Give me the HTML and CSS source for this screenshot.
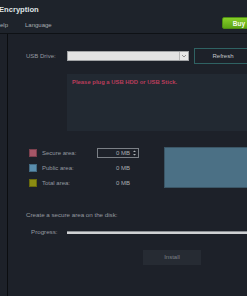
FILE: index.html
```html
<!DOCTYPE html>
<html>
<head>
<meta charset="utf-8">
<link rel="stylesheet" href="styles.css">
</head>
<body>
<div class="window">
  <header class="header">
    <div class="title">Encryption</div>
    <div class="menubar">
      <span class="menu menu-help">elp</span>
      <span class="menu">Language</span>
      <span class="spacer"></span>
      <span class="buy">Buy</span>
    </div>
  </header>
  <div class="body">
    <div class="strip"></div>
    <main class="main">
      <div class="drive-row">
        <span class="label drive-label">USB Drive:</span>
        <div class="select">
          <div class="select-field"></div>
          <div class="select-arrow">
            <svg width="6" height="4" viewBox="0 0 6 4"><path d="M1 1 L3 3 L5 1" fill="none" stroke="#7a7a7a" stroke-width="0.8"/></svg>
          </div>
        </div>
        <div class="refresh">Refresh</div>
      </div>
      <div class="message">Please plug a USB HDD or USB Stick.</div>
      <div class="areas">
        <div class="rows">
          <div class="row">
            <span class="swatch swatch-secure"></span>
            <span class="label row-label">Secure area:</span>
            <span class="value spin">0 MB
              <svg class="spin-arrows" width="3" height="6" viewBox="0 0 3 6"><path d="M0 2 L1.5 0.5 L3 2 Z M0 4 L1.5 5.5 L3 4 Z" fill="#b0b4b8"/></svg>
            </span>
          </div>
          <div class="row">
            <span class="swatch swatch-public"></span>
            <span class="label row-label">Public area:</span>
            <span class="value">0 MB</span>
          </div>
          <div class="row">
            <span class="swatch swatch-total"></span>
            <span class="label row-label">Total area:</span>
            <span class="value">0 MB</span>
          </div>
        </div>
        <div class="chart"></div>
      </div>
      <div class="label create">Create a secure area on the disk:</div>
      <div class="progress-row">
        <span class="label progress-label">Progress:</span>
        <div class="progress-bar"></div>
      </div>
      <div class="install">Install</div>
    </main>
  </div>
</div>
</body>
</html>
```

FILE: styles.css
```css
html, body {
  margin: 0;
  padding: 0;
  width: 247px;
  height: 296px;
  overflow: hidden;
  background: #1d2129;
}
.window {
  width: 247px;
  height: 296px;
  overflow: hidden;
  font-family: "Liberation Sans", Arial, sans-serif;
  color: #9ea3a9;
  font-size: 6px;
  display: flex;
  flex-direction: column;
}
.header {
  height: 33px;
  border-bottom: 1px solid #0e1115;
  background: #1e232b;
  flex: none;
}
.title {
  font-weight: bold;
  font-size: 7.6px;
  color: #dfe2e5;
  margin-left: -1px;
  padding-top: 5px;
  line-height: 9px;
  height: 9px;
  white-space: nowrap;
}
.menubar {
  display: flex;
  align-items: center;
  margin-top: 3px;
  height: 12px;
  white-space: nowrap;
}
.menu {
  color: #a9adb2;
  font-size: 6px;
  line-height: 8px;
  padding-top: 3px;
}
.menu-help {
  margin-right: 17px;
}
.spacer {
  flex: 1;
}
.buy {
  flex: none;
  width: 34px;
  margin-right: -9px;
  height: 12px;
  line-height: 12px;
  text-align: center;
  font-weight: bold;
  font-size: 6.5px;
  color: #f4fbe8;
  background: linear-gradient(#86cf28, #5ca515);
  border: 1px solid #4e8d14;
  border-radius: 2px;
  box-sizing: border-box;
}
.body {
  display: flex;
  flex: 1;
}
.strip {
  width: 7px;
  border-right: 1px solid #0b0d10;
  flex: none;
}
.main {
  flex: none;
  width: 300px;
  padding-left: 18px;
  box-sizing: border-box;
}
.label {
  line-height: 8px;
  color: #959aa0;
  white-space: nowrap;
}
.drive-row {
  display: flex;
  align-items: center;
  margin-top: 14px;
  height: 16px;
}
.drive-label {
  width: 41px;
  flex: none;
}
.select {
  display: flex;
  width: 122px;
  height: 10px;
  box-sizing: border-box;
  border: 1px solid #a2a4a6;
  background: #e3e3e3;
}
.select-field {
  flex: 1;
  border-right: 1px solid #b8b8b8;
}
.select-arrow {
  width: 8px;
  display: flex;
  align-items: center;
  justify-content: center;
  background: #e8e8e8;
}
.refresh {
  margin-left: 5px;
  width: 58px;
  height: 16px;
  box-sizing: border-box;
  border: 1px solid #2f6263;
  line-height: 14px;
  text-align: center;
  color: #c2c6ca;
  font-size: 6px;
}
.message {
  margin-top: 10px;
  margin-left: 41px;
  height: 57px;
  background: #222932;
  color: #b93d5b;
  font-weight: bold;
  font-size: 5.9px;
  padding: 5px 0 0 5px;
  box-sizing: border-box;
  line-height: 6px;
  white-space: nowrap;
}
.areas {
  display: flex;
  margin-top: 16px;
}
.rows {
  padding-top: 1px;
  display: flex;
  flex-direction: column;
  gap: 5px;
}
.row {
  display: flex;
  align-items: center;
  height: 10px;
}
.swatch {
  width: 8px;
  height: 8px;
  margin-left: 3px;
  box-sizing: border-box;
  border: 1px solid rgba(0,0,0,0.25);
}
.swatch-secure { background: #a55667; }
.swatch-public { background: #5a8eae; }
.swatch-total { background: #8b8c12; }
.row-label {
  margin-left: 5px;
  width: 55px;
}
.value {
  width: 42px;
  height: 10px;
  box-sizing: border-box;
  padding-right: 9px;
  text-align: right;
  line-height: 10px;
  color: #a8acb0;
  position: relative;
}
.spin {
  border: 1px solid #7b8086;
  line-height: 8px;
  padding-right: 8px;
}
.spin-arrows {
  position: absolute;
  right: 2px;
  top: 1px;
}
.chart {
  margin-left: 25px;
  width: 100px;
  height: 41px;
  box-sizing: border-box;
  background: #4b7085;
  border: 1px solid #3b5666;
}
.create {
  margin-top: 23px;
  font-size: 6.2px;
}
.progress-row {
  display: flex;
  align-items: center;
  margin-top: 9px;
  height: 8px;
}
.progress-label {
  margin-left: 5px;
  width: 36px;
  font-size: 6.2px;
}
.progress-bar {
  width: 200px;
  height: 2px;
  background: #cfd1d3;
  border-top: 1px solid #8a8e92;
}
.install {
  margin-top: 14px;
  margin-left: 117px;
  width: 58px;
  height: 15px;
  line-height: 15px;
  background: #262b33;
  text-align: center;
  color: #7c8187;
  font-size: 6px;
}
```
